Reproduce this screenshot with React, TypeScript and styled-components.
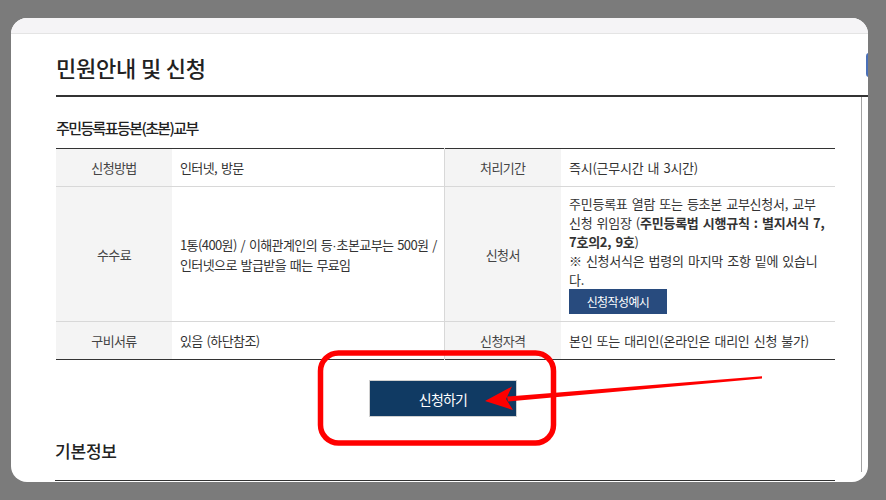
import React from 'react'
import styled, { createGlobalStyle } from 'styled-components'

const GlobalStyle = createGlobalStyle`
  html, body {
    margin: 0;
    padding: 0;
    background: #7b7b7b;
  }
  body {
    font-family: "Noto Sans CJK KR", "Malgun Gothic", sans-serif;
    color: #333;
  }
`

const Page = styled.div`
  position: relative;
  width: 886px;
  height: 500px;
  padding: 18px 0 0 11px;
  box-sizing: border-box;
  overflow: hidden;
`

const Card = styled.div`
  width: 857px;
  height: 464px;
  background: #fff;
  border-radius: 16px;
  overflow: hidden;
  display: flex;
  flex-direction: column;
`

const TopStrip = styled.div`
  flex: 0 0 15px;
  background: #f5f4f6;
  border-bottom: 1px solid #e4e4e4;
`

const Body = styled.div`
  padding-left: 45px;
  display: flex;
  flex-direction: column;
  flex: 1;
  min-height: 0;
`

const Header = styled.div`
  height: 61px;
  display: flex;
  align-items: center;
  justify-content: space-between;
  border-bottom: 2px solid #333;
`

const Title = styled.h1`
  margin: 0;
  padding-top: 5px;
  font-size: 22px;
  font-weight: 500;
  letter-spacing: -0.2px;
  color: #222;
`

const SideTab = styled.div`
  width: 20px;
  height: 24px;
  margin-right: -18px;
  background: #4a70b8;
  border-radius: 3px 0 0 3px;
`

const Lower = styled.div`
  display: flex;
  flex: 1;
  min-height: 0;
`

const Main = styled.div`
  width: 779px;
  flex: 0 0 779px;
`

const SideRule = styled.div`
  margin-left: 26px;
  border-left: 1px solid #a3a3a3;
  flex: 1;
  margin-bottom: 10px;
`

const SubTitle = styled.h2`
  margin: 19px 0 8px;
  height: 24px;
  line-height: 24px;
  font-size: 15px;
  font-weight: 500;
  letter-spacing: -1.6px;
  color: #222;
`

const Table = styled.table`
  width: 779px;
  border-collapse: collapse;
  table-layout: fixed;
  border-top: 1px solid #333;
  border-bottom: 1px solid #333;
  font-size: 13px;
  letter-spacing: -0.6px;
  line-height: 19px;
`

const Row = styled.tr`
  & + & {
    border-top: 1px solid #d8d8d8;
  }
`

const Th = styled.th<{ $divider?: boolean }>`
  background: #f4f4f4;
  font-weight: 400;
  color: #444;
  text-align: center;
  padding: 7px 8px;
  height: 23px;
  border-left: ${p => (p.$divider ? '1px solid #d8d8d8' : 'none')};
`

const Td = styled.td<{ $loose?: boolean }>`
  padding: 7px 8px;
  color: #333;
  vertical-align: middle;
  white-space: nowrap;
  letter-spacing: ${p => (p.$loose ? '-0.25px' : '-0.6px')};
  word-spacing: 1.5px;
`

const Dot = styled.span`
  font-family: "Liberation Sans", sans-serif;
  letter-spacing: 0;
`

const FormButton = styled.button`
  display: block;
  height: 25px;
  width: 98px;
  border: none;
  background: #284b7e;
  color: #fff;
  font-family: inherit;
  font-size: 12px;
  letter-spacing: -0.6px;
  padding: 0;
`

const ButtonRow = styled.div`
  display: flex;
  justify-content: center;
  padding-top: 20px;
`

const ApplyButton = styled.button`
  width: 148px;
  height: 37px;
  margin-left: -5px;
  background: #103a63;
  border: 1px solid #d0d0d0;
  color: #fff;
  font-family: inherit;
  font-size: 14px;
  letter-spacing: -0.8px;
`

const SectionTitle = styled.h2`
  margin: 22px 0 0 -1px;
  padding-bottom: 17px;
  line-height: 24px;
  font-size: 17px;
  font-weight: 500;
  letter-spacing: -0.2px;
  color: #222;
  border-bottom: 1px solid #333;
`

const Overlay = styled.svg`
  position: absolute;
  left: 0;
  top: 0;
  pointer-events: none;
`

export default function App() {
  return (
    <>
      <GlobalStyle />
      <Page>
        <Card>
          <TopStrip />
          <Body>
            <Header>
              <Title>민원안내 및 신청</Title>
              <SideTab />
            </Header>
            <Lower>
              <Main>
                <SubTitle>주민등록표등본(초본)교부</SubTitle>
                <Table>
                  <colgroup>
                    <col style={{ width: 116 }} />
                    <col style={{ width: 272 }} />
                    <col style={{ width: 117 }} />
                    <col style={{ width: 274 }} />
                  </colgroup>
                  <tbody>
                    <Row>
                      <Th>신청방법</Th>
                      <Td>인터넷, 방문</Td>
                      <Th $divider>처리기간</Th>
                      <Td $loose>즉시(근무시간 내 3시간)</Td>
                    </Row>
                    <Row>
                      <Th>수수료</Th>
                      <Td>
                        1통(400원) / 이해관계인의 등<Dot>·</Dot>초본교부는 500원 /
                        <br />
                        인터넷으로 발급받을 때는 무료임
                      </Td>
                      <Th $divider>신청서</Th>
                      <Td $loose>
                        주민등록표 열람 또는 등초본 교부신청서, 교부
                        <br />
                        신청 위임장 (<b>주민등록법 시행규칙 : 별지서식 7,</b>
                        <br />
                        <b>7호의2, 9호</b>)
                        <br />
                        ※ 신청서식은 법령의 마지막 조항 밑에 있습니
                        <br />
                        다.
                        <FormButton>신청작성예시</FormButton>
                      </Td>
                    </Row>
                    <Row>
                      <Th>구비서류</Th>
                      <Td>있음 (하단참조)</Td>
                      <Th $divider>신청자격</Th>
                      <Td $loose>본인 또는 대리인(온라인은 대리인 신청 불가)</Td>
                    </Row>
                  </tbody>
                </Table>
                <ButtonRow>
                  <ApplyButton>신청하기</ApplyButton>
                </ButtonRow>
                <SectionTitle>기본정보</SectionTitle>
              </Main>
              <SideRule />
            </Lower>
          </Body>
        </Card>
        <Overlay width="886" height="500" viewBox="0 0 886 500">
          <rect x="320.5" y="353" width="233" height="90" rx="18" fill="none" stroke="#f00" strokeWidth="5.5" />
          <polygon points="762,376.3 762,378.6 508,401.5 507,396.5" fill="#f00" />
          <polygon points="485,401 512,386.5 506,399 513,410" fill="#f00" />
        </Overlay>
      </Page>
    </>
  )
}
